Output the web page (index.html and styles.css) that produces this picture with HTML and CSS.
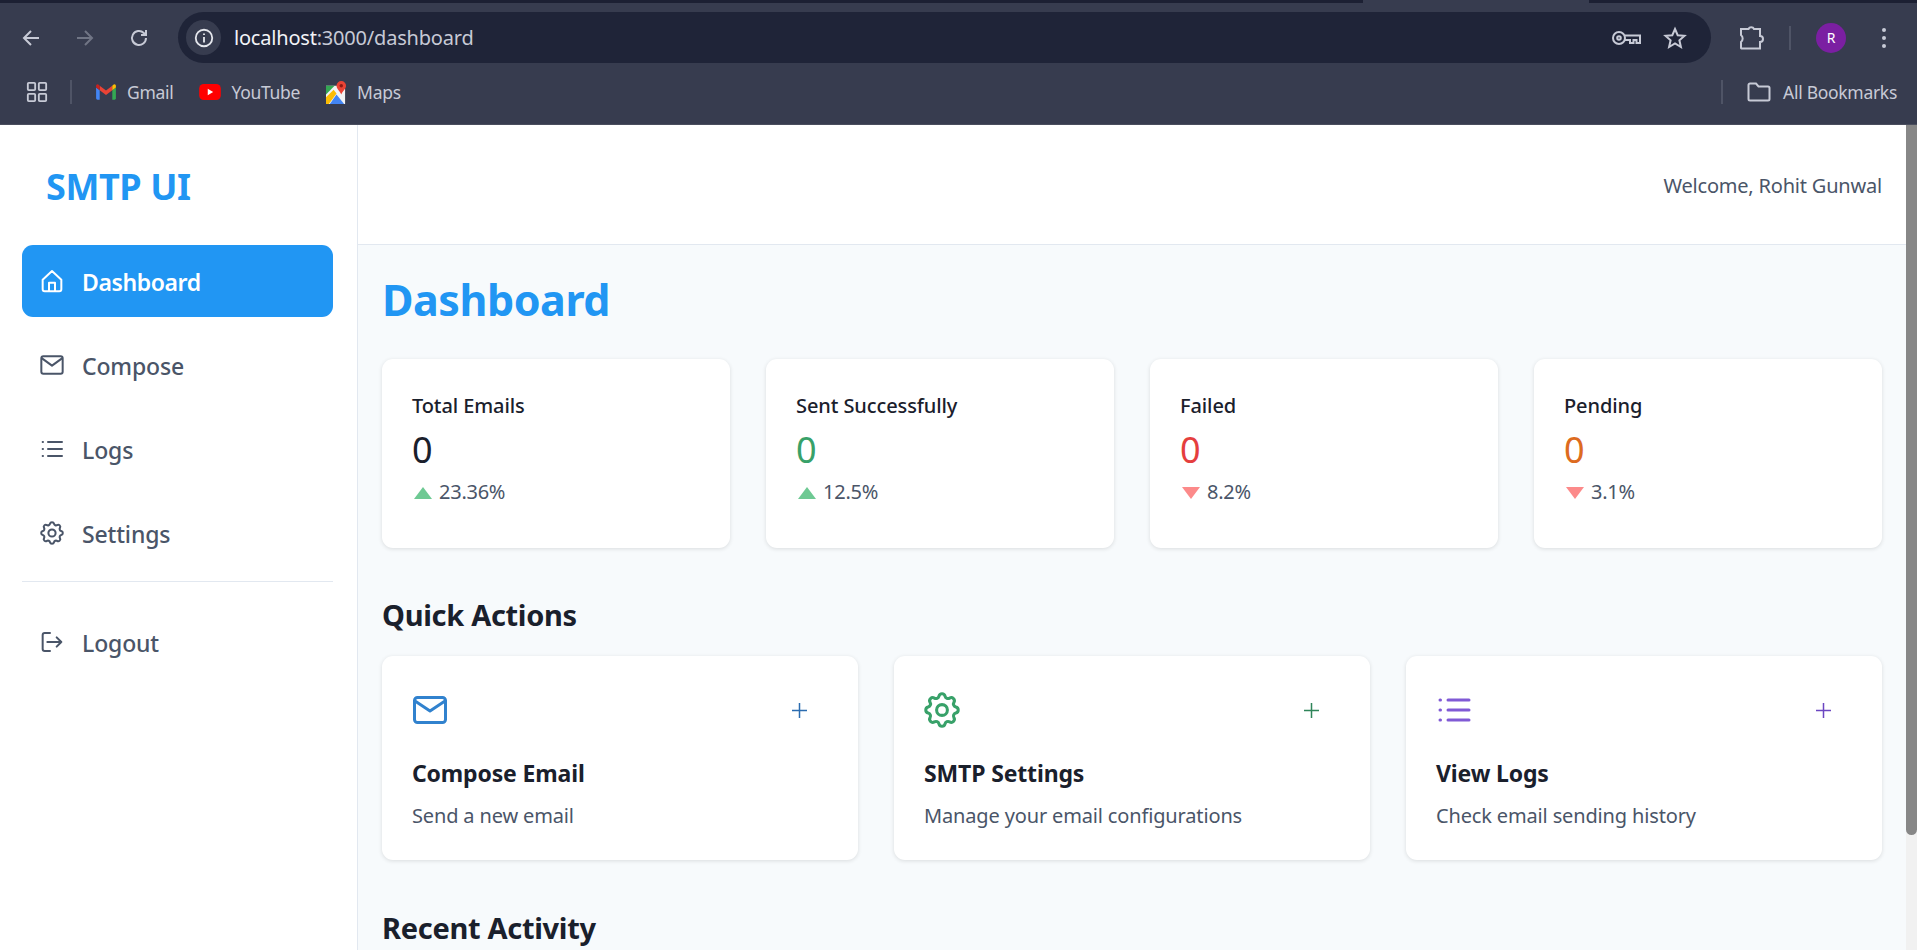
FILE: index.html
```html
<!DOCTYPE html>
<html lang="en">
<head>
<meta charset="utf-8">
<title>SMTP UI</title>
<link rel="stylesheet" href="styles.css">
</head>
<body>
<div class="browser">
  <div class="tabstrip"><span class="ts-left"></span><span class="ts-gap"></span><span class="ts-right"></span></div>
  <div class="toolbar">
    <span class="tb-btn"><svg viewBox="0 0 24 24" class="i-chrome"><path d="M20 12H5M12 5l-7 7 7 7"/></svg></span>
    <span class="tb-btn dim"><svg viewBox="0 0 24 24" class="i-chrome"><path d="M4 12h15M12 5l7 7-7 7"/></svg></span>
    <span class="tb-btn"><svg viewBox="0 0 24 24" class="i-chrome"><path d="M19 12a7 7 0 1 1-2.2-5.1L19 9M19 4v5h-5"/></svg></span>
    <div class="address">
      <span class="chip"><svg viewBox="0 0 24 24" class="i-chrome thin"><circle cx="12" cy="12" r="9"/><path d="M12 11v6M12 7v1.6"/></svg></span>
      <span class="url"><span class="host">localhost</span>:3000/dashboard</span>
      <span class="addr-icons">
        <svg viewBox="0 0 32 24" class="i-key"><circle cx="8" cy="12" r="6"/><circle cx="8" cy="12" r="1.800"/><path d="M14 9.500H29v7.500h-3.500v-3h-3v3H19v-3h-5"/></svg>
        <svg viewBox="0 0 24 24" class="i-star"><path d="M12 3l2.700 6.200 6.800.6-5.100 4.500 1.500 6.700L12 17.500 6.100 21l1.500-6.700-5.100-4.500 6.800-.6z"/></svg>
      </span>
    </div>
    <svg viewBox="0 0 28 28" class="i-puzzle"><path d="M4 5h7.500a3 3 0 0 1 5.500 0h6v7a3 3 0 0 1 0 6v6.500H4.500a1 1 0 0 1-.5-.5v-6a4.500 4.500 0 0 0 0-7z"/></svg>
    <span class="sep tall"></span>
    <span class="avatar">R</span>
    <span class="dots"><i></i><i></i><i></i></span>
  </div>
  <div class="bookmarks">
    <svg viewBox="0 0 24 24" class="i-apps"><rect x="2" y="2" width="8" height="8" rx="1"/><rect x="14" y="2" width="8" height="8" rx="1"/><rect x="2" y="14" width="8" height="8" rx="1"/><rect x="14" y="14" width="8" height="8" rx="1"/></svg>
    <span class="sep first"></span>
    <span class="bm">
      <svg viewBox="0 0 24 20" class="i-bm"><path d="M1 18.500V5l4 3v10.500H2.500A1.500 1.500 0 0 1 1 17z" fill="#4285f4"/><path d="M19 18.500V8l4-3v12a1.500 1.500 0 0 1-1.500 1.500z" fill="#34a853"/><path d="M5 8l7 5.200L19 8V3l-7 5.200L5 3z" fill="#ea4335"/><path d="M19 3l1.500-1.200A1.600 1.600 0 0 1 23 3.200V5l-4 3z" fill="#fbbc04"/><path d="M1 5V3.200a1.600 1.600 0 0 1 2.500-1.400L5 3v5z" fill="#c5221f"/></svg>
      Gmail
    </span>
    <span class="bm">
      <svg viewBox="0 0 24 20" class="i-bm"><rect x="0" y="1" width="24" height="18" rx="5" fill="#f00"/><path d="M9.500 6.500l6 3.500-6 3.500z" fill="#fff"/></svg>
      YouTube
    </span>
    <span class="bm">
      <svg viewBox="0 0 22 24" class="i-maps"><path d="M0 5h12l8 3v16H0z" fill="#f1f3f4"/><path d="M0 5h9L0 14z" fill="#34a853"/><path d="M0 17l8-8 3 4-8 11H0z" fill="#fbbc04"/><path d="M4 24l7-10 8 10z" fill="#4285f4"/><path d="M16 0a5 5 0 0 1 5 5c0 3-3 5-5 9-2-4-5-6-5-9a5 5 0 0 1 5-5z" fill="#ea4335"/><circle cx="16" cy="5" r="1.800" fill="#8f1a14"/></svg>
      Maps
    </span>
    <span class="sep last"></span>
    <span class="bm all">
      <svg viewBox="0 0 24 20" class="i-folder"><path d="M1.500 3a1.500 1.500 0 0 1 1.500-1.500h6l2.500 3H21A1.500 1.500 0 0 1 22.500 6v11a1.500 1.500 0 0 1-1.500 1.500H3A1.500 1.500 0 0 1 1.500 17z"/></svg>
      All Bookmarks
    </span>
  </div>
</div>

<div class="app">
  <aside class="sidebar">
    <div class="logo">SMTP UI</div>
    <nav class="nav">
      <a class="nav-item active">
        <svg viewBox="0 0 36 36" class="icon"><path d="M4 16L18 3l14 13v14.500a3 3 0 0 1-3 3H7a3 3 0 0 1-3-3zM13.500 33V20.500h9V33"/></svg>
        Dashboard
      </a>
      <a class="nav-item">
        <svg viewBox="0 0 36 36" class="icon"><rect x="2" y="5" width="32" height="26" rx="3"/><path d="M3 8l15 11L33 8"/></svg>
        Compose
      </a>
      <a class="nav-item">
        <svg viewBox="0 0 36 36" class="icon"><path d="M12 7.500h21M12 18h21M12 28.500h21M4 7.500h.5M4 18h.5M4 28.500h.5"/></svg>
        Logs
      </a>
      <a class="nav-item">
        <svg viewBox="2 2 20 20" class="icon gear"><path d="M10.325 4.317c.426-1.756 2.924-1.756 3.350 0a1.724 1.724 0 0 0 2.573 1.066c1.543-.940 3.310.826 2.370 2.370a1.724 1.724 0 0 0 1.065 2.572c1.756.426 1.756 2.924 0 3.350a1.724 1.724 0 0 0-1.066 2.573c.940 1.543-.826 3.310-2.370 2.370a1.724 1.724 0 0 0-2.572 1.065c-.426 1.756-2.924 1.756-3.350 0a1.724 1.724 0 0 0-2.573-1.066c-1.543.940-3.310-.826-2.370-2.370a1.724 1.724 0 0 0-1.065-2.572c-1.756-.426-1.756-2.924 0-3.350a1.724 1.724 0 0 0 1.066-2.573c-.940-1.543.826-3.310 2.370-2.370.996.608 2.296.070 2.572-1.065z"/><circle cx="12" cy="12" r="3"/></svg>
        Settings
      </a>
      <hr class="nav-rule">
      <a class="nav-item">
        <svg viewBox="0 0 36 36" class="icon"><path d="M15 4.500H7a3 3 0 0 0-3 3v21a3 3 0 0 0 3 3h8M11 18h21M25 11l7 7-7 7"/></svg>
        Logout
      </a>
    </nav>
  </aside>

  <main class="main">
    <header class="topbar">Welcome, Rohit Gunwal</header>
    <div class="content">
      <h1 class="page-title">Dashboard</h1>
      <section class="stats">
        <div class="stat">
          <div class="stat-label">Total Emails</div>
          <div class="stat-value">0</div>
          <div class="stat-delta"><span class="tri up"></span>23.36%</div>
        </div>
        <div class="stat">
          <div class="stat-label">Sent Successfully</div>
          <div class="stat-value green">0</div>
          <div class="stat-delta"><span class="tri up"></span>12.5%</div>
        </div>
        <div class="stat">
          <div class="stat-label">Failed</div>
          <div class="stat-value red">0</div>
          <div class="stat-delta"><span class="tri down"></span>8.2%</div>
        </div>
        <div class="stat">
          <div class="stat-label">Pending</div>
          <div class="stat-value orange">0</div>
          <div class="stat-delta"><span class="tri down"></span>3.1%</div>
        </div>
      </section>

      <h2 class="section-title">Quick Actions</h2>
      <section class="actions">
        <div class="action blue">
          <div class="action-head">
            <svg viewBox="0 0 36 36" class="big"><rect x="2.500" y="5.500" width="31" height="25" rx="3"/><path d="M3 9l15 10L33 9"/></svg>
            <svg viewBox="0 0 15 15" class="plus"><path d="M7.500 0v15M0 7.500h15"/></svg>
          </div>
          <div class="action-title">Compose Email</div>
          <div class="action-desc">Send a new email</div>
        </div>
        <div class="action green">
          <div class="action-head">
            <svg viewBox="2 2 20 20" class="big thin"><path d="M10.325 4.317c.426-1.756 2.924-1.756 3.350 0a1.724 1.724 0 0 0 2.573 1.066c1.543-.940 3.310.826 2.370 2.370a1.724 1.724 0 0 0 1.065 2.572c1.756.426 1.756 2.924 0 3.350a1.724 1.724 0 0 0-1.066 2.573c.940 1.543-.826 3.310-2.370 2.370a1.724 1.724 0 0 0-2.572 1.065c-.426 1.756-2.924 1.756-3.350 0a1.724 1.724 0 0 0-2.573-1.066c-1.543.940-3.310-.826-2.370-2.370a1.724 1.724 0 0 0-1.065-2.572c-1.756-.426-1.756-2.924 0-3.350a1.724 1.724 0 0 0 1.066-2.573c-.940-1.543.826-3.310 2.370-2.370.996.608 2.296.070 2.572-1.065z"/><circle cx="12" cy="12" r="3"/></svg>
            <svg viewBox="0 0 15 15" class="plus"><path d="M7.500 0v15M0 7.500h15"/></svg>
          </div>
          <div class="action-title">SMTP Settings</div>
          <div class="action-desc">Manage your email configurations</div>
        </div>
        <div class="action purple">
          <div class="action-head">
            <svg viewBox="0 0 36 36" class="big"><path d="M12 8h21M12 18h21M12 28h21M4 8h.5M4 18h.5M4 28h.5"/></svg>
            <svg viewBox="0 0 15 15" class="plus"><path d="M7.500 0v15M0 7.500h15"/></svg>
          </div>
          <div class="action-title">View Logs</div>
          <div class="action-desc">Check email sending history</div>
        </div>
      </section>

      <h2 class="section-title recent">Recent Activity</h2>
    </div>
  </main>

  <div class="scrollbar"><div class="thumb"></div></div>
</div>
</body>
</html>
```

FILE: styles.css
```css
* { box-sizing: border-box; }
html, body { margin: 0; height: 100%; overflow: hidden; }
body {
  display: flex;
  flex-direction: column;
  font-family: "Noto Sans", "Open Sans", sans-serif;
  background: #fff;
  color: #1a202c;
}

/* Browser chrome */
.browser { height: 125px; flex: none; background: #373c4f; border-bottom: 1px solid #4a4e5e; color: #c7cad6; }
.tabstrip { display: flex; height: 3px; background: #1c2033; }
.ts-left { width: 1363px; }
.ts-gap { width: 226px; background: #373c4f; }
.ts-right { flex: 1; }
.toolbar { display: flex; align-items: center; height: 66px; padding: 9px 0 6px 13px; }
.tb-btn { width: 36px; display: flex; justify-content: center; margin-right: 18px; }
.tb-btn:nth-child(3) { margin-right: 21px; }
.tb-btn.dim { opacity: .4; }
.i-chrome { width: 24px; height: 24px; fill: none; stroke: #c7cad6; stroke-width: 2; }
.i-chrome.thin { width: 22px; height: 22px; stroke: #e4e6ec; }
.address {
  width: 1533px; height: 51px; border-radius: 26px; background: #1f2438;
  display: flex; align-items: center; padding-left: 8px;
}
.chip { width: 35px; height: 35px; border-radius: 50%; background: #373c4f; display: flex; align-items: center; justify-content: center; }
.url { margin-left: 13px; font-size: 20px; letter-spacing: -.2px; color: #c7cad6; }
.host { color: #f2f3f7; }
.addr-icons { margin-left: auto; display: flex; align-items: center; gap: 20px; padding-right: 24px; }
.i-key { width: 32px; height: 24px; fill: none; stroke: #c7cad6; stroke-width: 2; }
.i-star { width: 24px; height: 24px; fill: none; stroke: #c7cad6; stroke-width: 2; }
.i-puzzle { width: 28px; height: 28px; margin-left: 26px; margin-right: 1px; fill: none; stroke: #c7cad6; stroke-width: 2; }
.sep { display: block; width: 2px; height: 24px; background: #4f5466; }
.sep.tall { margin-left: 23px; }
.avatar {
  width: 30px; height: 30px; margin-left: 25px; border-radius: 50%; background: #7b1fa2; color: #fff;
  font-size: 14px; display: flex; align-items: center; justify-content: center;
}
.dots { display: flex; flex-direction: column; gap: 4px; margin-left: 36px; }
.dots i { display: block; width: 4px; height: 4px; border-radius: 50%; background: #c7cad6; }
.bookmarks { display: flex; align-items: center; height: 46px; padding-left: 26px; font-size: 17.500px; letter-spacing: -.3px; }
.i-apps { width: 22px; height: 22px; fill: none; stroke: #c7cad6; stroke-width: 2; }
.sep.first { margin-left: 22px; margin-right: 23px; }
.sep.last { margin-left: auto; margin-right: 24px; }
.bm { display: flex; align-items: center; gap: 10px; margin-right: 26px; white-space: nowrap; }
.bm.all { margin-right: 20px; gap: 12px; }
.i-bm { width: 22px; height: 18px; }
.i-maps { width: 21px; height: 23px; }
.i-folder { width: 24px; height: 20px; fill: none; stroke: #c7cad6; stroke-width: 2; }

/* App */
.app { flex: 1; min-height: 0; display: flex; }
.sidebar { width: 358px; flex: none; background: #fff; border-right: 1px solid #e2e8f0; padding: 0 24px 0 22px; }
.logo { height: 120px; padding: 43px 0 0 24px; font-size: 36px; line-height: 38px; font-weight: 700; color: #2196f3; letter-spacing: -.4px; }
.nav { display: flex; flex-direction: column; gap: 12px; }
.nav-item {
  height: 72px; display: flex; align-items: center; gap: 18px; padding: 2px 0 0 18px;
  border-radius: 11px; font-size: 23px; font-weight: 500; color: #4a5568; letter-spacing: -.15px;
}
.nav-item.active { background: #2196f3; color: #fff; font-weight: 600; letter-spacing: -.4px; }
.icon { width: 24px; height: 24px; flex: none; margin-top: -2px; fill: none; stroke: currentColor; stroke-width: 3; stroke-linecap: round; stroke-linejoin: round; }
.icon.gear { stroke-width: 1.7; }
.nav-rule { width: 100%; height: 1px; margin: 0 0 12px; border: 0; background: #e2e8f0; }

.main { flex: 1; min-width: 0; background: #f7fafc; overflow: hidden; }
.topbar {
  height: 120px; background: #fff; border-bottom: 1px solid #e2e8f0; padding: 2px 24px 0 0;
  display: flex; align-items: center; justify-content: flex-end; font-size: 20px; color: #4a5568; letter-spacing: -.2px;
}
.content { padding: 24px 24px 0; }
.page-title { margin: 0 0 28px; font-size: 43px; line-height: 62px; font-weight: 700; color: #2196f3; letter-spacing: -.45px; }
.stats { display: grid; grid-template-columns: repeat(4, 1fr); gap: 36px; }
.stat, .action { background: #fff; border-radius: 11px; box-shadow: 0 1px 4px rgba(0, 0, 0, .12); }
.stat { padding: 30px 30px 39px; }
.stat-label { font-size: 20px; line-height: 34px; font-weight: 500; color: #1a202c; letter-spacing: -.1px; }
.stat-value { margin-top: 2px; font-size: 36px; line-height: 50px; color: #1a202c; font-weight: 400; }
.stat-value.green { color: #38a169; }
.stat-value.red { color: #e53e3e; }
.stat-value.orange { color: #dd6b20; }
.stat-delta { display: flex; align-items: center; font-size: 20px; line-height: 34px; color: #4a5568; letter-spacing: -.25px; }
.tri { width: 0; height: 0; margin: 2px 7px 0 2px; border-left: 9px solid transparent; border-right: 9px solid transparent; }
.tri.up { border-bottom: 12px solid #6ec993; }
.tri.down { border-top: 12px solid #fc8a8a; }

.section-title { margin: 47px 0 21px; font-size: 29px; line-height: 40px; font-weight: 700; color: #1a202c; letter-spacing: -.3px; }
.section-title.recent { margin-top: 48px; margin-bottom: 0; }
.actions { display: grid; grid-template-columns: repeat(3, 1fr); gap: 36px; }
.action { padding: 30px 30px 27px; }
.action-head { height: 48px; display: flex; align-items: center; justify-content: space-between; }
.big { width: 36px; height: 36px; fill: none; stroke: currentColor; stroke-width: 3; stroke-linecap: round; stroke-linejoin: round; }
.big.thin { stroke-width: 1.7; }
.plus { width: 15px; height: 15px; margin-right: 21px; fill: none; stroke-width: 1.5; }
.action.blue .big { color: #3182ce; }
.action.green .big { color: #38a169; }
.action.purple .big { color: #805ad5; }
.action.blue .plus { stroke: #2b6cb0; }
.action.green .plus { stroke: #2f855a; }
.action.purple .plus { stroke: #6b46c1; }
.action-title { margin-top: 20px; font-size: 23px; line-height: 38px; font-weight: 700; color: #1a202c; letter-spacing: -.15px; }
.action-desc { margin-top: 7px; font-size: 20px; line-height: 34px; color: #4a5568; letter-spacing: -.15px; }

.scrollbar { width: 11px; flex: none; background: #f1f1f1; }
.thumb { height: 710px; background: #878787; border-radius: 0 0 6px 6px; }
```
